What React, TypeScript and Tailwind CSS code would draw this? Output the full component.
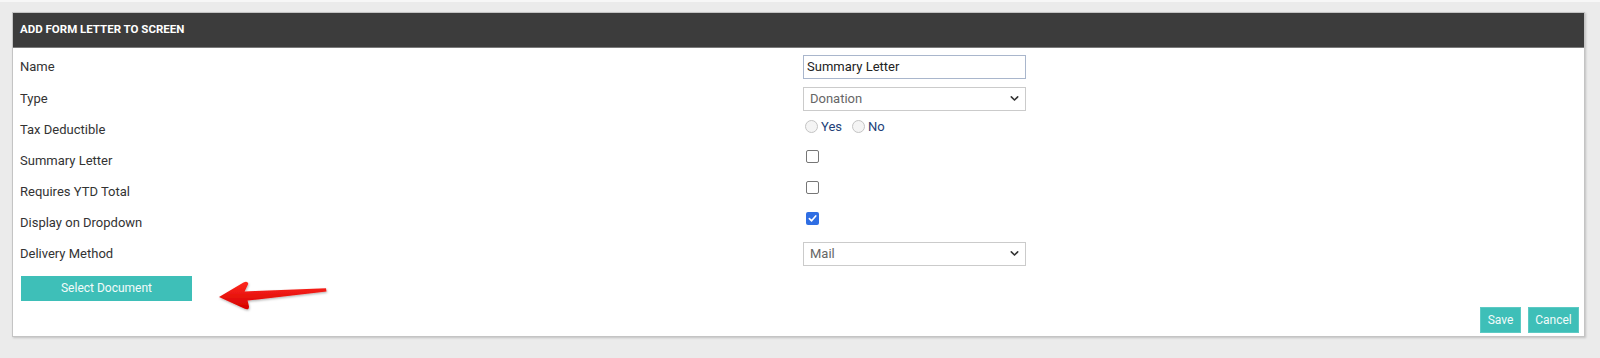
const font = { fontFamily: 'Roboto, "Liberation Sans", Arial, sans-serif' };

type Row = { label: string; height: string; control: React.ReactNode };

function Checkbox({ checked = false }: { checked?: boolean }) {
  if (checked) {
    return (
      <span className="mb-[8px] ml-[3px] flex h-[13px] w-[13px] items-center justify-center rounded-[2px] bg-[#2f6ee3]">
        <svg width="9" height="9" viewBox="0 0 10 10" fill="none">
          <path d="M1.5 5.2 L4 7.6 L8.6 2.2" stroke="#fff" strokeWidth="1.8" strokeLinecap="round" strokeLinejoin="round" />
        </svg>
      </span>
    );
  }
  return <span className="mb-[8px] ml-[3px] h-[13px] w-[13px] rounded-[2px] border border-[#767676] bg-white" />;
}

function Select({ value }: { value: string }) {
  return (
    <div className="flex h-[24px] w-[223px] items-center justify-between border border-[#cbcbcb] bg-white pl-[6px] pr-[5px] text-[13px] text-[#666]">
      <span>{value}</span>
      <svg width="11" height="11" viewBox="0 0 12 12" fill="none">
        <path d="M2.5 4.2 L6 7.7 L9.5 4.2" stroke="#333" strokeWidth="1.7" strokeLinecap="round" strokeLinejoin="round" />
      </svg>
    </div>
  );
}

function Radio({ label }: { label: string }) {
  return (
    <span className="flex items-center">
      <span className="h-[13px] w-[13px] rounded-full border border-[#c4c4c4] bg-[#f4f4f4]" />
      <span className="ml-[3px] text-[13px] text-[#233f78]">{label}</span>
    </span>
  );
}

export default function App() {
  const rows: Row[] = [
    {
      label: 'Name',
      height: 'h-[32px]',
      control: (
        <div className="flex h-[24px] w-[223px] items-center border border-[#a9b6cc] bg-white px-[3px] text-[13px] text-[#222]">
          Summary Letter
        </div>
      ),
    },
    { label: 'Type', height: 'h-[31px]', control: <Select value="Donation" /> },
    {
      label: 'Tax Deductible',
      height: 'h-[31px]',
      control: (
        <div className="mb-[6px] ml-[2px] flex items-center gap-[10px]">
          <Radio label="Yes" />
          <Radio label="No" />
        </div>
      ),
    },
    { label: 'Summary Letter', height: 'h-[31px]', control: <Checkbox /> },
    { label: 'Requires YTD Total', height: 'h-[31px]', control: <Checkbox /> },
    { label: 'Display on Dropdown', height: 'h-[31px]', control: <Checkbox checked /> },
    { label: 'Delivery Method', height: 'h-[31px]', control: <Select value="Mail" /> },
  ];

  return (
    <div className="h-[358px] w-full border-t-2 border-[#f7f7f7] bg-[#ebebeb] pt-[10px]" style={font}>
      <div className="relative ml-[12px] w-[1573px] border border-[#c4c4c4] bg-white shadow-[1px_1px_2px_rgba(0,0,0,0.18)]">
        <div className="flex h-[35px] items-center border-b border-[#7a7a7a] bg-[#3c3c3c] px-[7px] text-[11.5px] font-bold uppercase text-white">
          Add Form Letter to Screen
        </div>

        <div className="pt-[3px]">
          {rows.map((row) => (
            <div key={row.label} className={`grid grid-cols-[790px_1fr] ${row.height}`}>
              <div className="flex items-center pl-[7px] text-[13px] text-[#333]">{row.label}</div>
              <div className="flex items-center">{row.control}</div>
            </div>
          ))}
        </div>

        <div className="ml-[8px] mt-[6px]">
          <button className="h-[25px] w-[171px] bg-[#3ebfb8] text-[12px] text-[#f2fbfa]">Select Document</button>
        </div>

        <div className="flex justify-end gap-[7px] pb-[3px] pr-[5px] pt-[6px]">
          <button className="h-[26px] w-[41px] border border-[#5ccac4] bg-[#3ebfb8] text-[12px] text-[#f2fbfa]">Save</button>
          <button className="h-[26px] w-[51px] border border-[#5ccac4] bg-[#3ebfb8] text-[12px] text-[#f2fbfa]">Cancel</button>
        </div>

        {/* annotation arrow pointing at the Select Document button */}
        <svg
          className="absolute left-[203px] top-[264px]"
          width="118"
          height="36"
          viewBox="0 0 118 36"
          fill="none"
        >
          <defs>
            <linearGradient id="arrowFill" x1="0" y1="0" x2="0" y2="1">
              <stop offset="0" stopColor="#ff2a1f" />
              <stop offset="1" stopColor="#d40000" />
            </linearGradient>
            <filter id="arrowShadow" x="-10%" y="-20%" width="130%" height="160%">
              <feDropShadow dx="0.6" dy="1.2" stdDeviation="1" floodColor="#000" floodOpacity="0.3" />
            </filter>
          </defs>
          <path
            d="M3 20 L27.5 5.4 Q31.5 3.4 32.3 6.8 L28.6 14.4 L110 11.2 L110.5 14.6 L31.6 23.6 L33 29.4 Q33 33.4 28.8 31.8 Z"
            fill="url(#arrowFill)"
            filter="url(#arrowShadow)"
          />
        </svg>
      </div>
    </div>
  );
}
